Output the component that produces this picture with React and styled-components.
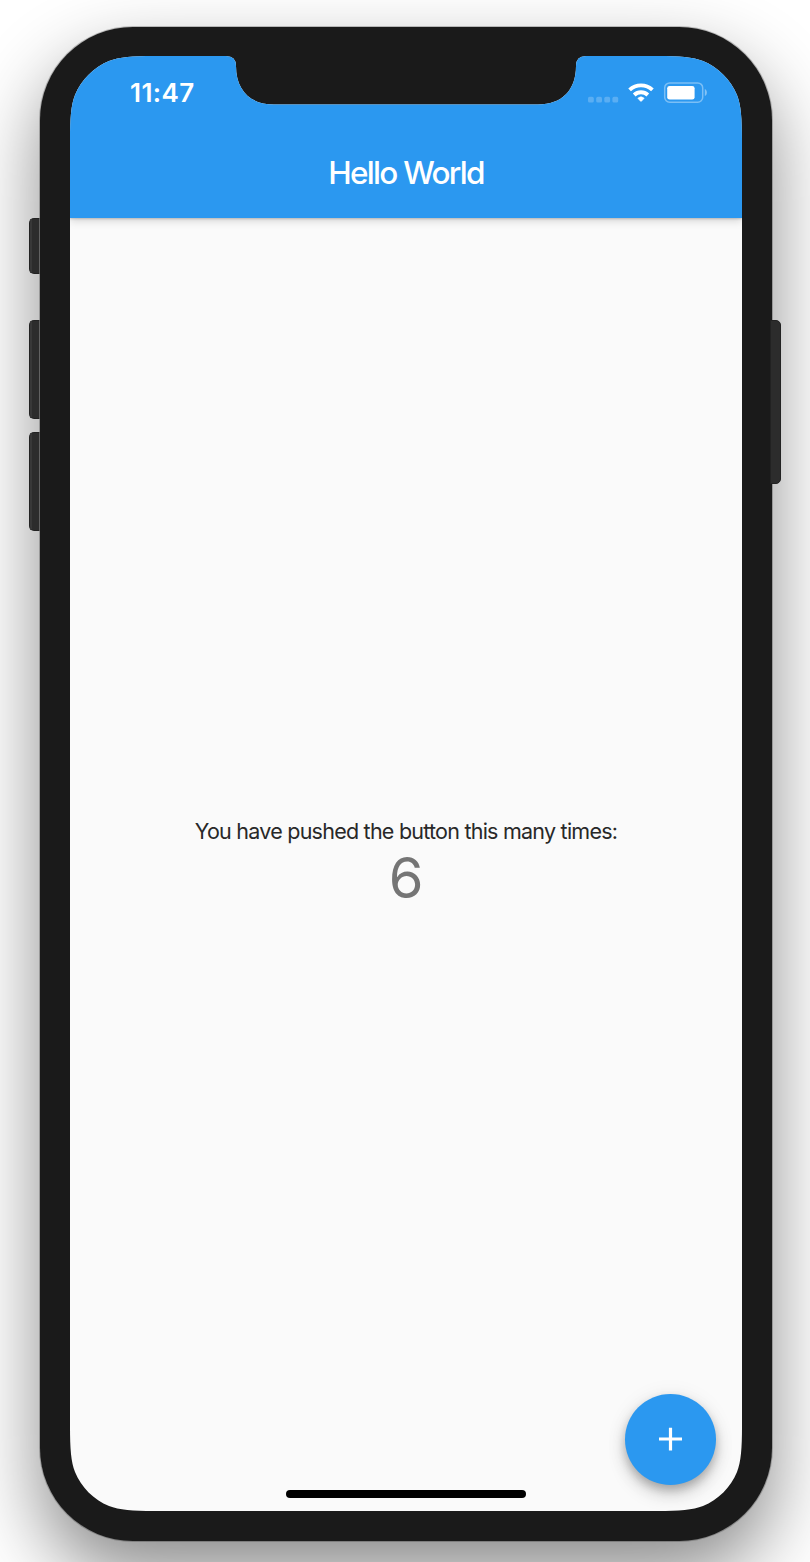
import React, { useState } from 'react';
import styled, { createGlobalStyle } from 'styled-components';

const GlobalStyle = createGlobalStyle`
  * { box-sizing: border-box; }
  html, body { margin: 0; padding: 0; background: #fff; }
  body {
    font-family: Inter, Roboto, "Liberation Sans", sans-serif;
    font-variant-ligatures: none;
  }
`;

const Stage = styled.main`
  display: flex;
  align-items: flex-start;
  width: 810px;
  height: 1562px;
  padding: 27px 29px 21px;
  overflow: hidden;
  background: #fff;
`;

const Phone = styled.div`
  flex: none;
  width: 732px;
  height: 1514px;
  padding: 29px 30px 30px;
  border-radius: 93px;
  background: #1a1a1a;
  box-shadow: 0 0 0 1px rgba(0, 0, 0, 0.22), 0 34px 76px rgba(0, 0, 0, 0.46);
`;

const LeftButtons = styled.div`
  display: flex;
  flex-direction: column;
  gap: 13px;
  width: 11px;
  padding-top: 191px;
  z-index: 1;
`;

const RightButtons = styled(LeftButtons)`
  padding-top: 293px;
  margin-left: -2px;
`;

const SideButton = styled.span`
  height: ${(p) => p.$height}px;
  border: 1px solid #222;
`;

const LeftButton = styled(SideButton)`
  border-radius: 5px 0 0 5px;
  border-right-color: #626262;
  background: linear-gradient(90deg, #383838 0 2px, #2c2c2c 2px);
`;

const MuteSwitch = styled(LeftButton)`
  margin-bottom: 33px;
`;

const PowerButton = styled(SideButton)`
  border-radius: 0 5px 5px 0;
  background: #2c2c2c;
`;

const Screen = styled.div`
  position: relative;
  display: flex;
  flex-direction: column;
  width: 672px;
  height: 1455px;
  background: #fafafa;
  clip-path: path('M0 84 C0 63 1 49 5 39 C11 24 24 11 39 5 C49 1 63 0 84 0 H156 Q166 0 166 10 C166 34 180 48.5 204 48.5 H468 C492 48.5 506 34 506 10 Q506 0 516 0 H588 C609 0 623 1 633 5 C648 11 661 24 667 39 C671 49 672 63 672 84 V1371 C672 1392 671 1406 667 1416 C661 1431 648 1444 633 1450 C623 1454 609 1455 588 1455 H84 C63 1455 49 1454 39 1450 C24 1444 11 1431 5 1416 C1 1406 0 1392 0 1371 Z');
`;

const Header = styled.header`
  height: 162px;
  flex: none;
  background: #2b98f0;
  color: #fff;
  box-shadow: 0 1px 2px rgba(0, 0, 0, 0.18), 0 3px 8px rgba(0, 0, 0, 0.15);
`;

const StatusBar = styled.div`
  display: flex;
  align-items: center;
  justify-content: space-between;
  height: 73px;
  padding: 0 34px 0 60px;
`;

const Clock = styled.time`
  font-size: 26px;
  font-weight: 600;
  line-height: 32px;
  letter-spacing: 0.4px;
`;

const StatusIcons = styled.svg`
  display: block;
  width: 120px;
  height: 22px;
`;

const Title = styled.h1`
  margin: 0;
  height: 89px;
  line-height: 87px;
  text-align: center;
  font-size: 31.5px;
  font-weight: 500;
  letter-spacing: -1.7px;
`;

const Content = styled.section`
  flex: 1;
  display: flex;
  flex-direction: column;
  align-items: center;
  justify-content: center;
  padding-bottom: 2px;
`;

const Message = styled.p`
  margin: 0;
  font-size: 21.5px;
  line-height: 28px;
  letter-spacing: -0.76px;
  white-space: nowrap;
  color: #282828;
`;

const Count = styled.output`
  font-size: 56px;
  line-height: 66px;
  color: #757575;
`;

const AddButton = styled.button`
  position: absolute;
  right: 26px;
  bottom: 26px;
  display: flex;
  align-items: center;
  justify-content: center;
  width: 91px;
  height: 91px;
  padding: 0;
  border: 0;
  border-radius: 50%;
  background: #2b98f0;
  box-shadow: 0 5px 9px rgba(0, 0, 0, 0.2), 0 10px 18px rgba(0, 0, 0, 0.15), 0 2px 22px rgba(0, 0, 0, 0.07);
`;

const HomeIndicator = styled.div`
  position: absolute;
  left: 216px;
  bottom: 13px;
  width: 240px;
  height: 8px;
  border-radius: 4px;
  background: #000;
`;

function StatusGlyphs() {
  return (
    <StatusIcons viewBox="588 82 120 22" aria-hidden="true">
      <g fill="#fff" opacity="0.22">
        {[588, 596.2, 604.3, 612.4].map((x) => (
          <rect key={x} x={x} y="96.8" width="5.8" height="5.8" rx="1.6" />
        ))}
      </g>
      <g fill="none" stroke="#fff" strokeWidth="3.9">
        <path d="M629.6 89.9 A16.6 16.6 0 0 1 652.4 89.9" />
        <path d="M634.2 95 A9.9 9.9 0 0 1 647.8 95" />
      </g>
      <path d="M637.8 98.2 Q641 95.2 644.2 98.2 L641.6 101.1 Q641 101.7 640.4 101.1 Z" fill="#fff" stroke="#fff" strokeWidth="0.6" strokeLinejoin="round" />
      <rect x="664.7" y="82.9" width="38" height="19.4" rx="5" fill="none" stroke="#fff" strokeOpacity="0.38" strokeWidth="1.5" />
      <rect x="667.2" y="85.9" width="27.4" height="13.7" rx="2.4" fill="#fff" />
      <path d="M704.8 89 C707.6 90 707.6 95 704.8 96 Z" fill="#fff" opacity="0.42" />
    </StatusIcons>
  );
}

export default function App() {
  const [count, setCount] = useState(6);
  return (
    <Stage>
      <GlobalStyle />
      <LeftButtons>
        <MuteSwitch $height={56} />
        <LeftButton $height={99} />
        <LeftButton $height={99} />
      </LeftButtons>
      <Phone>
        <Screen>
          <Header>
            <StatusBar>
              <Clock>11:47</Clock>
              <StatusGlyphs />
            </StatusBar>
            <Title>Hello World</Title>
          </Header>
          <Content>
            <Message>You have pushed the button this many times:</Message>
            <Count>{count}</Count>
          </Content>
          <AddButton aria-label="Increment" onClick={() => setCount(count + 1)}>
            <svg width="25" height="25" viewBox="0 0 25 25">
              <path d="M12.5 0.8 V23.6 M1 12 H24" stroke="#fff" strokeWidth="3.2" />
            </svg>
          </AddButton>
          <HomeIndicator />
        </Screen>
      </Phone>
      <RightButtons>
        <PowerButton $height={164} />
      </RightButtons>
    </Stage>
  );
}
